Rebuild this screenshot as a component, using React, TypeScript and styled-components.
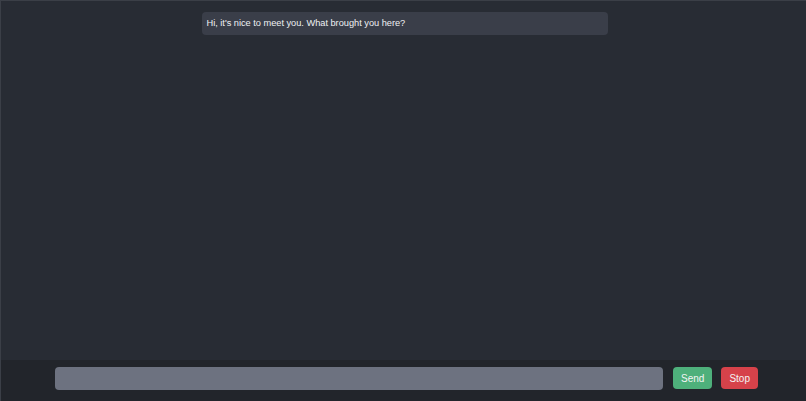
import React from 'react';
import styled, { createGlobalStyle } from 'styled-components';

const GlobalStyle = createGlobalStyle`
  html, body {
    margin: 0;
    padding: 0;
    background-color: #282c34;
  }
  * {
    box-sizing: border-box;
  }
`;

// Whole chat window
const ChatWindow = styled.div`
  width: 806px;
  height: 401px;
  display: flex;
  flex-direction: column;
  background-color: #282c34;
  border: 1px solid #3b3f47;
  border-bottom: none;
  border-right: none;
  font-family: "Liberation Sans", Arial, sans-serif;
`;

const MessageList = styled.div`
  flex: 1;
  display: flex;
  flex-direction: column;
  align-items: center;
  padding-top: 11px;
  gap: 8px;
`;

const Bubble = styled.div`
  width: 406px;
  margin-left: 2px;
  padding: 5px 5px;
  background-color: #3a3e49;
  color: #eef0f3;
  font-size: 9.25px;
  line-height: 13px;
  letter-spacing: -0.02px;
  border-radius: 4px;
`;

const Composer = styled.div`
  height: 41px;
  display: flex;
  align-items: flex-start;
  gap: 10px;
  padding: 7px 48px 0 54px;
  background-color: #22252b;
`;

const Input = styled.input`
  flex: 1;
  height: 23px;
  border: none;
  border-radius: 4px;
  background-color: #6d7280;
  outline: none;
  padding: 0 8px;
  color: #fff;
  font-family: inherit;
`;

const Button = styled.button<{ $variant: 'send' | 'stop' }>`
  height: 22px;
  padding: 0 8px;
  margin-left: ${(p) => (p.$variant === 'stop' ? '-1px' : '0')};
  border: none;
  border-radius: 4px;
  color: #f4f4f4;
  font-family: inherit;
  font-size: 10px;
  cursor: pointer;
  background-color: ${(p) => (p.$variant === 'send' ? '#4eb07b' : '#d6424a')};
`;

const App = () => {
  return (
    <>
      <GlobalStyle />
      <ChatWindow>
        <MessageList>
          <Bubble>Hi, it's nice to meet you. What brought you here?</Bubble>
        </MessageList>
        <Composer>
          <Input type="text" />
          <Button $variant="send">Send</Button>
          <Button $variant="stop">Stop</Button>
        </Composer>
      </ChatWindow>
    </>
  );
};

export default App;
